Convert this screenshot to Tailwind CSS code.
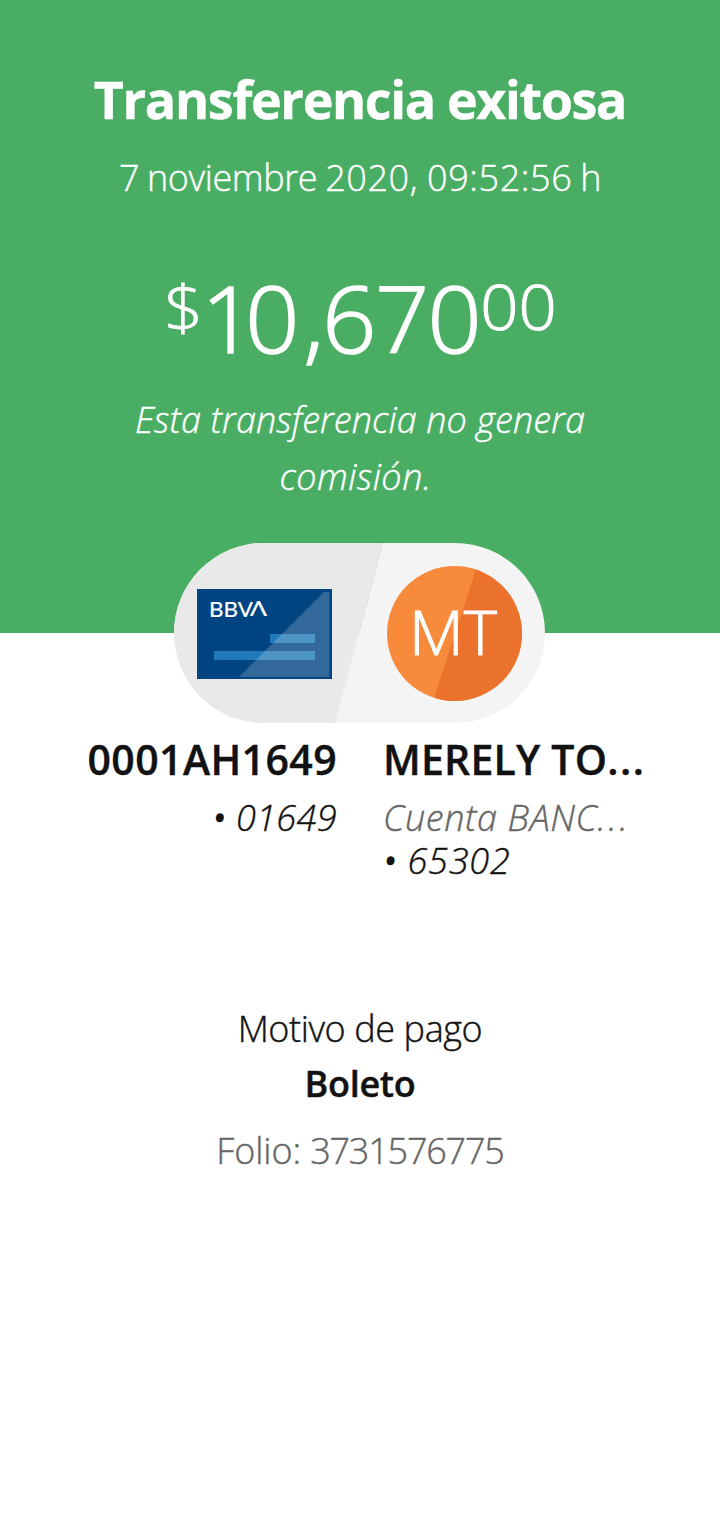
<!DOCTYPE html>
<html lang="es">
<head>
  <meta charset="UTF-8">
  <meta name="viewport" content="width=device-width, initial-scale=1.0">
  <title>Transferencia exitosa</title>
  <script src="https://cdn.jsdelivr.net/npm/@tailwindcss/browser@4"></script>
</head>
<body class="min-h-screen bg-white font-['Open_Sans',sans-serif] text-4xl font-light text-[#121212] [-webkit-text-stroke:0.4px]">

  <!-- Header -->
  <header class="flex h-[633px] flex-col items-center bg-[#49ae64] pt-[69px] text-center whitespace-nowrap text-white">
    <h1 class="text-[52px] leading-[60px] font-bold tracking-[-1.35px]">Transferencia exitosa</h1>
    <p class="mt-[21px] leading-[56px] tracking-[-0.4px] [word-spacing:-1px]">7 noviembre <span class="tracking-[0.6px]">2020, 09:52:56</span> h</p>
    <div class="mt-[63px] flex h-24 items-start">
      <span class="mr-[2px] scale-x-110 text-[62px] leading-[76px] [-webkit-text-stroke:0.8px]">$</span>
      <span class="scale-x-102 text-[93px] leading-[96px] tracking-[-1.5px] [-webkit-text-stroke:1.6px]"><span class="tracking-[-10px]">1</span><span class="tracking-[4px]">0</span>,670</span>
      <span class="ml-[6px] scale-x-108 text-[62px] leading-[74px] [-webkit-text-stroke:1px]">00</span>
    </div>
    <p class="mt-[26px] leading-[57px] tracking-[0.1px] italic">Esta transferencia no genera<br><span class="pr-[9px] tracking-[0.5px]">comisión.</span></p>
  </header>

  <main>
    <!-- Origin / destination -->
    <div class="mx-auto -mt-[90px] flex h-[180px] w-[372px]">
      <svg class="h-[180px] w-[371px]" viewBox="0 0 371 180">
        <defs>
          <clipPath id="pill"><rect width="371" height="180" rx="90" /></clipPath>
          <clipPath id="avatar"><circle cx="280.5" cy="90.5" r="67.5" /></clipPath>
        </defs>
        <g clip-path="url(#pill)">
          <rect width="371" height="180" fill="#f4f4f4" />
          <path d="M0 0H209L161 180H0Z" fill="#e9e9e9" />
          <path d="M209 0L185 90" stroke="#b9dcc6" stroke-width="0.7" stroke-dasharray="2 2" />
        </g>
        <!-- Card -->
        <rect x="23" y="46" width="135" height="90" fill="#004481" />
        <rect x="96" y="91" width="45" height="9" fill="#237aba" />
        <rect x="40" y="108" width="101" height="9" fill="#237aba" />
        <path d="M65 134L150 49H155.500V134Z" fill="#fff" fill-opacity="0.2" />
        <text x="35" y="74" font-family="Lato, sans-serif" font-weight="400" font-size="21" fill="#fff" stroke="#fff" stroke-width="0.2" textLength="44" lengthAdjust="spacingAndGlyphs">BBV</text>
        <text x="76" y="73" font-family="Lato, sans-serif" font-weight="400" font-size="21" fill="#fff" stroke="#fff" stroke-width="0.2" textLength="17" lengthAdjust="spacingAndGlyphs">Λ</text>
        <!-- Avatar -->
        <g clip-path="url(#avatar)">
          <rect x="213" y="23" width="135" height="135" fill="#f78b3b" />
          <path d="M303 23L259 158H348V23Z" fill="#ea722d" />
        </g>
        <text x="235" y="112" font-family="Open Sans, sans-serif" font-weight="300" font-size="61" fill="#fff" stroke="#fff" stroke-width="1" textLength="88" lengthAdjust="spacingAndGlyphs">MT</text>
      </svg>
    </div>

    <div class="mt-[14px] grid grid-cols-[337px_1fr] gap-x-[46px] whitespace-nowrap">
      <div class="text-right">
        <p class="text-[41px] leading-[44px] font-semibold tracking-[0.4px]">0001AH1649</p>
        <p class="mt-[15px] leading-[43px] tracking-[0.4px] italic"><span class="[-webkit-text-stroke:2.5px]">•</span> 01649</p>
      </div>
      <div>
        <p class="text-[41px] leading-[44px] font-semibold tracking-[0.2px]">MERELY TO<span class="tracking-[1.5px]">...</span></p>
        <p class="mt-[15px] leading-[43px] tracking-[0.6px] text-[#666] italic">Cuenta BANC<span class="tracking-[2.8px]">...</span></p>
        <p class="leading-[43px] tracking-[0.8px] italic"><span class="[-webkit-text-stroke:2.5px]">•</span> 65302</p>
      </div>
    </div>

    <!-- Payment details -->
    <div class="mt-[119px] flex flex-col items-center">
      <p class="leading-[56px] tracking-[-0.4px]">Motivo de pago</p>
      <p class="leading-[54px] font-semibold tracking-[-0.3px]">Boleto</p>
      <p class="mt-3 leading-[56px] tracking-[-0.1px] text-[#666]">Folio: <span class="tracking-[-1.2px]">3731576775</span></p>
    </div>
  </main>

</body>
</html>
